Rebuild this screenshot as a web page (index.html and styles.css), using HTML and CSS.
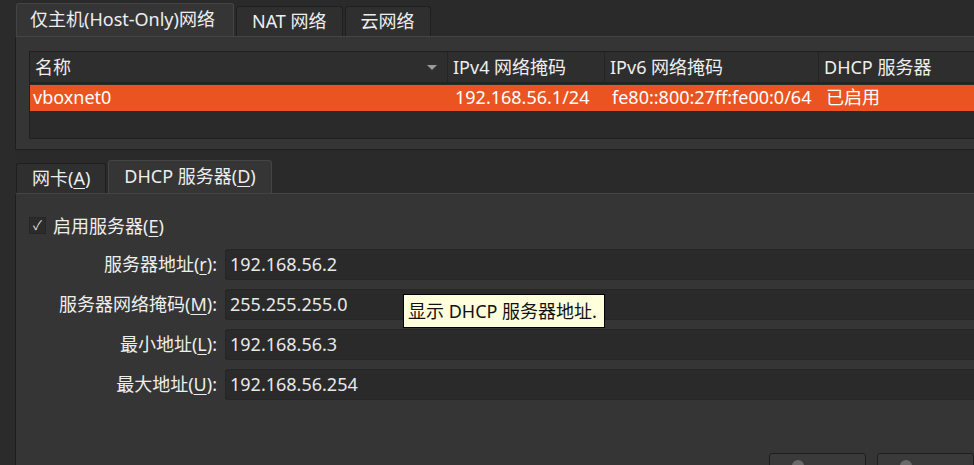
FILE: index.html
```html
<!DOCTYPE html>
<html lang="zh-CN">
<head>
    <meta charset="UTF-8">
    <title>主机网络管理器</title>
    <link rel="stylesheet" href="styles.css">
</head>
<body>
    <div class="side"></div>
    <main class="main">
        <nav class="tabs top-tabs">
            <div class="tab active">仅主机(Host-Only)网络</div>
            <div class="tab">NAT 网络</div>
            <div class="tab">云网络</div>
        </nav>

        <section class="pane">
            <div class="table">
                <div class="row head">
                    <div class="cell c-name">名称<span class="sort"></span></div>
                    <div class="cell c-v4">IPv4 网络掩码</div>
                    <div class="cell c-v6">IPv6 网络掩码</div>
                    <div class="cell c-dhcp">DHCP 服务器</div>
                </div>
                <div class="row selected">
                    <div class="cell c-name">vboxnet0</div>
                    <div class="cell c-v4">192.168.56.1/24</div>
                    <div class="cell c-v6">fe80::800:27ff:fe00:0/64</div>
                    <div class="cell c-dhcp">已启用</div>
                </div>
            </div>
        </section>

        <nav class="tabs lower-tabs">
            <div class="tab">网卡(<u>A</u>)</div>
            <div class="tab active">DHCP 服务器(<u>D</u>)</div>
        </nav>

        <section class="panel">
            <label class="check">
                <span class="box">&#10003;</span>
                <span>启用服务器(<u>E</u>)</span>
            </label>

            <div class="form">
                <div class="label">服务器地址(<u>r</u>):</div>
                <div class="field">192.168.56.2</div>
                <div class="label">服务器网络掩码(<u>M</u>):</div>
                <div class="field">255.255.255.0</div>
                <div class="label">最小地址(<u>L</u>):</div>
                <div class="field">192.168.56.3</div>
                <div class="label">最大地址(<u>U</u>):</div>
                <div class="field">192.168.56.254</div>
            </div>

            <div class="buttons">
                <div class="btn"><span class="dot"></span></div>
                <div class="btn"><span class="dot"></span></div>
            </div>

            <div class="tooltip">显示 DHCP 服务器地址.</div>
        </section>
    </main>
</body>
</html>
```

FILE: styles.css
```css
body {
    margin: 0;
    height: 465px;
    overflow: hidden;
    display: flex;
    background: #2a2a2a;
    color: #eeeeee;
    font-family: "Noto Sans", "Noto Sans CJK SC", sans-serif;
    font-size: 18px;
}

.side {
    width: 15px;
    flex-shrink: 0;
    background: #2b2b2b;
}

.main {
    flex: 1;
    display: flex;
    flex-direction: column;
    min-width: 0;
    overflow: hidden;
}

.main > * {
    flex-shrink: 0;
}

.tabs {
    display: flex;
    align-items: flex-end;
    gap: 2px;
    padding-left: 1px;
}

.top-tabs {
    height: 36px;
}

.tab {
    height: 30px;
    line-height: 29px;
    padding: 0 15px;
    background: #2f2f2f;
    border: 1px solid #1f1f1f;
    border-bottom: none;
    border-radius: 3px 3px 0 0;
    box-sizing: border-box;
    white-space: nowrap;
}

.tab.active {
    height: 33px;
    line-height: 31px;
    background: #353535;
    border-color: #444;
}

.top-tabs .tab.active {
    padding: 0 18px 0 13px;
}

u {
    text-decoration: underline;
    text-underline-offset: 3px;
    text-decoration-thickness: 1px;
}

.pane {
    height: 114px;
    box-sizing: border-box;
    background: #353535;
    border: 1px solid #1e1e1e;
    border-top-color: #444;
    border-right: none;
    padding: 14px 0 0 13px;
    overflow: hidden;
}

.table {
    height: 88px;
    margin-right: -40px;
    background: #2a2a2a;
    border: 1px solid #1f1f1f;
    border-right: none;
    box-sizing: border-box;
}

.row {
    display: flex;
    white-space: nowrap;
}

.row.head {
    height: 32px;
    line-height: 31px;
    background: #2e2e2e;
    border-bottom: 2px solid #232323;
    box-sizing: border-box;
}

.row.head .cell {
    border-right: 1px solid #242424;
    box-sizing: border-box;
}

.row.selected {
    height: 26px;
    line-height: 25px;
    background: #e95420;
    color: #fff;
    margin-top: 1px;
}

.cell {
    padding-left: 5px;
    overflow: hidden;
}

.row.selected .cell {
    padding-left: 7px;
}

.row.selected .c-name {
    padding-left: 3px;
}

.c-name {
    width: 418px;
    position: relative;
    box-sizing: border-box;
}

.c-v4 {
    width: 157px;
    box-sizing: border-box;
}

.c-v6 {
    width: 214px;
    box-sizing: border-box;
}

.c-dhcp {
    flex: 1;
}

.sort {
    position: absolute;
    right: 10px;
    top: 13px;
    border-left: 5px solid transparent;
    border-right: 5px solid transparent;
    border-top: 5px solid #9a9a9a;
}

.lower-tabs {
    height: 43px;
}

.panel {
    position: relative;
    flex: 1;
    background: #353535;
    border-left: 1px solid #1e1e1e;
    border-top: 1px solid #444;
    padding: 21px 0 0 13px;
}

.check {
    display: flex;
    align-items: center;
    gap: 7px;
    height: 20px;
}

.box {
    width: 15px;
    height: 15px;
    background: #2b2b2b;
    border: 1px solid #262626;
    font-size: 13px;
    line-height: 15px;
    text-align: center;
    color: #ddd;
}

.form {
    display: grid;
    grid-template-columns: 188px 1fr;
    column-gap: 8px;
    row-gap: 9px;
    margin-top: 14px;
}

.label {
    text-align: right;
    line-height: 31px;
    white-space: nowrap;
}

.field {
    height: 31px;
    line-height: 29px;
    background: #2a2a2a;
    border: 1px solid #262626;
    border-right: none;
    border-radius: 3px 0 0 3px;
    box-sizing: border-box;
    padding-left: 4px;
    color: #e8e8e8;
}

.buttons {
    display: flex;
    justify-content: flex-end;
    gap: 11px;
    margin-top: 53px;
}

.btn {
    width: 97px;
    height: 30px;
    background: #3a3a3a;
    border: 1px solid #1e1e1e;
    border-radius: 3px;
    box-sizing: border-box;
    padding: 6px 0 0 22px;
}

.dot {
    display: block;
    width: 12px;
    height: 12px;
    border-radius: 50%;
    background: #6a6a6a;
}

.tooltip {
    position: absolute;
    left: 387px;
    top: 100px;
    width: 202px;
    height: 34px;
    box-sizing: border-box;
    background: #ffffdc;
    border: 1px solid #000;
    color: #111;
    line-height: 32px;
    padding-left: 4px;
    white-space: nowrap;
}
```
